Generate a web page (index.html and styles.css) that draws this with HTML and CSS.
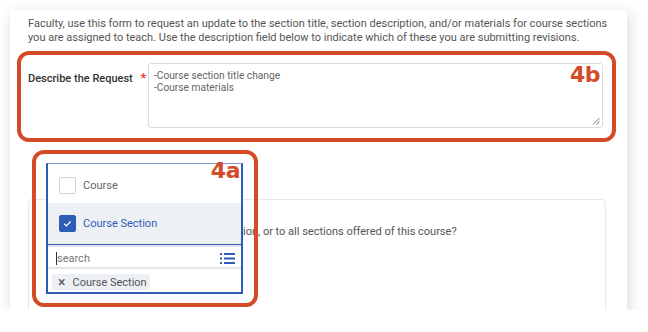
FILE: index.html
```html
<!DOCTYPE html>
<html>
<head>
<meta charset="utf-8">
<link rel="stylesheet" href="styles.css">
</head>
<body>
<div class="card">
  <p class="intro">Faculty, use this form to request an update to the section title, section description, and/or materials for course sections you are assigned to teach. Use the description field below to indicate which of these you are submitting revisions.</p>
  <div class="request-row">
    <label class="req-label">Describe the Request <span class="star">*</span></label>
    <div class="textarea">-Course section title change<br>-Course materials
      <svg class="grip" width="8" height="8" viewBox="0 0 8 8"><path d="M1 7.5 L7.5 1 M4.5 7.5 L7.5 4.5" stroke="#777" stroke-width="1"/></svg>
    </div>
    <span class="tag tag-b">4b</span>
  </div>
  <div class="inner-card">
    <p class="question">Is this request for this course section, or to all sections offered of this course?</p>
  </div>
  <div class="dd-callout">
    <span class="tag tag-a">4a</span>
    <div class="dd">
      <div class="opt opt-first">
        <span class="cb"></span><span class="opt-text">Course</span>
      </div>
      <div class="opt opt-sel">
        <span class="cb cb-on"><svg width="17" height="17" viewBox="0 0 17 17"><path d="M5.2 8.8 L7.4 10.8 L11.6 6.5" fill="none" stroke="#fff" stroke-width="1.2"/></svg></span><span class="opt-text">Course Section</span>
      </div>
      <div class="search">
        <div class="search-row">
          <span class="caret"></span><span class="ph">search</span>
          <svg class="list-ico" width="15" height="11" viewBox="0 0 15 11"><g fill="#2d5db5"><rect x="0" y="0" width="2" height="2"/><rect x="0" y="4.5" width="2" height="2"/><rect x="0" y="9" width="2" height="2"/><rect x="4" y="0" width="11" height="2"/><rect x="4" y="4.5" width="11" height="2"/><rect x="4" y="9" width="11" height="2"/></g></svg>
        </div>
        <div class="chips">
          <span class="chip"><span class="x">×</span>Course Section</span>
        </div>
      </div>
    </div>
  </div>
</div>
</body>
</html>
```
FILE: styles.css
```css
* { box-sizing: border-box; }
body {
  margin: 0;
  background: #fff;
  font-family: Roboto, "Liberation Sans", sans-serif;
  color: #555;
}
.card {
  position: relative;
  margin: 10px 0 0 10px;
  width: 617px;
  height: 300px;
  background: #fff;
  overflow: hidden;
  box-shadow: 2px 4px 14px rgba(0,0,0,0.16);
  padding: 7px 0 0 18px;
}
.intro {
  margin: 0;
  font-size: 11px;
  line-height: 14px;
  color: #555;
  width: 590px;
}
.request-row {
  position: relative;
  margin: 6px 0 0 -11px;
  width: 599px;
  height: 91px;
  border: 4px solid #d44c27;
  border-radius: 12px;
  padding: 8px 9px 10px 7px;
  display: flex;
}
.req-label {
  width: 120px;
  flex: none;
  padding-top: 8px;
  font-size: 11px;
  line-height: 14px;
  font-weight: 500;
  color: #333;
}
.star { color: #e0372b; margin-left: 5px; font-size: 13px; }
.textarea {
  position: relative;
  flex: 1;
  height: 65px;
  border: 1px solid #d6dce2;
  border-radius: 3px;
  padding: 6px 5px;
  font-size: 10.2px;
  line-height: 12px;
  color: #666;
}
.grip { position: absolute; right: 2px; bottom: 2px; }
.tag {
  position: absolute;
  font-family: "DejaVu Sans", sans-serif;
  font-weight: bold;
  color: #d44c27;
  font-size: 22px;
  line-height: 22px;
  letter-spacing: -0.5px;
}
.tag-b { right: 12px; top: 9px; }
.inner-card {
  margin-top: 57px;
  width: 578px;
  height: 130px;
  border: 1px solid #e6e8ea;
  border-radius: 4px;
  padding: 25px 0 0 48px;
}
.question {
  margin: 0;
  font-size: 11px;
  line-height: 14px;
  color: #555;
  white-space: nowrap;
}
.dd-callout {
  position: absolute;
  left: 22px;
  top: 140px;
  width: 226px;
  height: 157px;
  border: 4px solid #d44c27;
  border-radius: 12px;
  padding: 9px 11px 9px 10px;
  background: transparent;
}
.tag-a { right: 14px; top: 6px; z-index: 2; }
.dd {
  width: 197px;
  height: 131px;
  background: #fff;
  border: 2px solid #2d5db5;
  border-top: 1px solid #8796d4;
  display: flex;
  flex-direction: column;
}
.opt {
  height: 39px;
  display: flex;
  align-items: center;
  padding-left: 11px;
  gap: 7px;
  font-size: 11px;
  color: #666;
  flex: none;
}
.opt-first { padding-top: 3px; }
.opt-sel {
  height: 41px;
  background: #edf0f4;
  color: #2d5db5;
}
.cb {
  width: 17px;
  height: 17px;
  border: 1px solid #cfd4da;
  border-radius: 2px;
  background: #fff;
  display: block;
}
.cb-on { background: #2d5db5; border-color: #2d5db5; }
.cb-on svg { display: block; margin: -1px; }
.search {
  flex: 1;
  border-top: 1px solid #2d5db5;
  box-shadow: inset 0 2px 0 #e1e6ec;
  display: flex;
  flex-direction: column;
}
.search-row {
  height: 24px;
  display: flex;
  align-items: center;
  padding: 4px 0 0 8px;
  border-bottom: 2px solid #e1e6ec;
  font-size: 11px;
}
.caret { width: 1px; height: 13px; background: #333; }
.ph { color: #777; }
.list-ico { margin-left: auto; margin-right: 6px; }
.chips { padding: 3px 0 0 4px; }
.chip {
  display: inline-flex;
  align-items: center;
  height: 16px;
  padding: 0 3px 0 6px;
  background: #edf0f4;
  border-radius: 3px;
  font-size: 11px;
  color: #555;
}
.x { font-size: 14px; margin-right: 7px; color: #555; }
```
